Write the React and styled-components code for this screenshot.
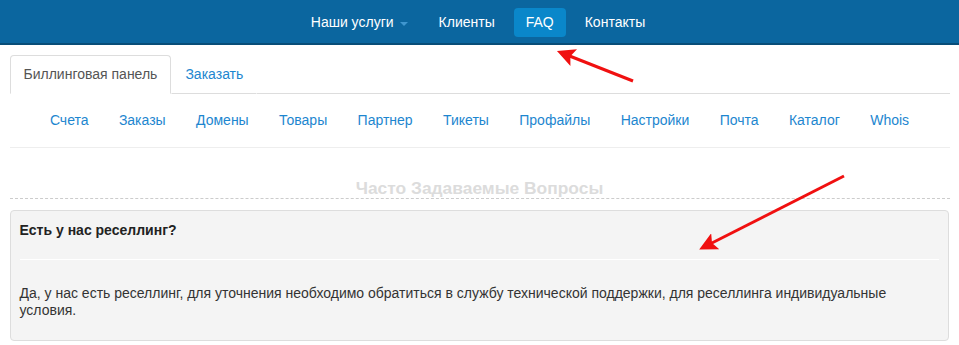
import React from 'react';
import styled, { createGlobalStyle } from 'styled-components';

const GlobalStyle = createGlobalStyle`
  html, body { margin: 0; padding: 0; background: #fff; }
  body {
    font-family: "Liberation Sans", Arial, sans-serif;
    font-size: 14px;
    color: #333;
  }
`;

const mainMenu = [
  { label: 'Наши услуги', caret: true },
  { label: 'Клиенты' },
  { label: 'FAQ', active: true },
  { label: 'Контакты' },
];

const clientMenu = ['Счета', 'Заказы', 'Домены', 'Товары', 'Партнер', 'Тикеты', 'Профайлы', 'Настройки', 'Почта', 'Каталог', 'Whois'];

const App = () => {
  return (
    <>
      <GlobalStyle />
      <Page>
        <TopBar>
          <TopNav>
            {mainMenu.map(item => (
              <TopLink key={item.label} $active={item.active}>
                {item.label}
                {item.caret && <Caret />}
              </TopLink>
            ))}
          </TopNav>
        </TopBar>

        <Container>
          <Tabs>
            <Tab $active>Биллинговая панель</Tab>
            <Tab>Заказать</Tab>
          </Tabs>

          <SubNav>
            {clientMenu.map(label => (
              <SubLink key={label}>{label}</SubLink>
            ))}
          </SubNav>

          <PageTitle>Часто Задаваемые Вопросы</PageTitle>

          <FaqPanel>
            <Question>Есть у нас реселлинг?</Question>
            <Divider />
            <Answer>
              Да, у нас есть реселлинг, для уточнения необходимо обратиться в службу технической поддержки, для реселлинга индивидуальные условия.
            </Answer>
          </FaqPanel>
        </Container>

        {/* красные стрелки-пометки поверх скриншота */}
        <Arrows width="959" height="345" viewBox="0 0 959 345">
          <defs>
            <marker id="head" markerWidth="6" markerHeight="6" refX="4.2" refY="3" orient="auto" markerUnits="strokeWidth">
              <path d="M0,0 L6,3 L0,6 L1.2,3 Z" fill="#f01010" />
            </marker>
          </defs>
          <line x1="633" y1="81" x2="562" y2="53" stroke="#f01010" strokeWidth="3" markerEnd="url(#head)" />
          <line x1="844" y1="176" x2="704" y2="247" stroke="#f01010" strokeWidth="3" markerEnd="url(#head)" />
        </Arrows>
      </Page>
    </>
  );
};

const Page = styled.div`
  position: relative;
  width: 959px;
  min-height: 345px;
  overflow: hidden;
`;

const TopBar = styled.header`
  background: #0b669f;
  border-bottom: 2px solid #084d78;
  height: 43px;
  display: flex;
  justify-content: center;
  align-items: center;
`;

const TopNav = styled.nav`
  display: flex;
  gap: 7px;
  align-items: center;
  margin-top: 2px;
  margin-right: 3px;
`;

const TopLink = styled.a`
  display: flex;
  align-items: center;
  padding: 6px 12px;
  line-height: 17px;
  font-size: 14px;
  color: #fff;
  border-radius: 4px;
  background: ${p => (p.$active ? '#0a87ca' : 'transparent')};
  cursor: pointer;
`;

const Caret = styled.span`
  display: inline-block;
  margin-left: 6px;
  margin-top: 2px;
  width: 0;
  height: 0;
  border-left: 4px solid transparent;
  border-right: 4px solid transparent;
  border-top: 4px solid #3f96cf;
`;

const Container = styled.main`
  width: 940px;
  margin: 0 auto;
`;

const Tabs = styled.ul`
  display: flex;
  list-style: none;
  margin: 10px 0 0;
  padding: 0;
  border-bottom: 1px solid #ddd;
`;

const Tab = styled.li`
  margin-bottom: -1px;
  padding: 10px 13px;
  line-height: 17px;
  font-size: 14px;
  border: 1px solid ${p => (p.$active ? '#ddd' : 'transparent')};
  border-bottom-color: ${p => (p.$active ? 'transparent' : '#ddd')};
  border-radius: 4px 4px 0 0;
  background: #fff;
  color: ${p => (p.$active ? '#555' : '#1d86cf')};
`;

const SubNav = styled.div`
  display: flex;
  justify-content: center;
  padding: 8px 0 8px;
  border-bottom: 1px solid #eee;
`;

const SubLink = styled.a`
  padding: 10px 15.2px;
  line-height: 17px;
  font-size: 14px;
  color: #1d86cf;
  cursor: pointer;
`;

const PageTitle = styled.h1`
  margin: 31px 0 0;
  padding: 0;
  text-align: center;
  font-size: 17.4px;
  line-height: 19px;
  font-weight: 700;
  color: #dcdcdc;
  border-bottom: 1px dashed #ccc;
`;

const FaqPanel = styled.section`
  margin-top: 11px;
  margin-right: 1px;
  padding: 10px 9px 21px;
  background: #f4f4f4;
  border: 1px solid #ddd;
  border-radius: 4px;
`;

const Question = styled.h4`
  margin: 0;
  font-size: 14px;
  line-height: 18px;
  font-weight: 700;
  color: #222;
`;

const Divider = styled.hr`
  margin: 20px 0 0;
  border: 0;
  border-top: 1px solid #fff;
`;

const Answer = styled.p`
  margin: 25px 0 0;
  font-size: 14px;
  line-height: 17px;
  color: #333;
`;

const Arrows = styled.svg`
  position: absolute;
  left: 0;
  top: 0;
  pointer-events: none;
`;

export default App;
